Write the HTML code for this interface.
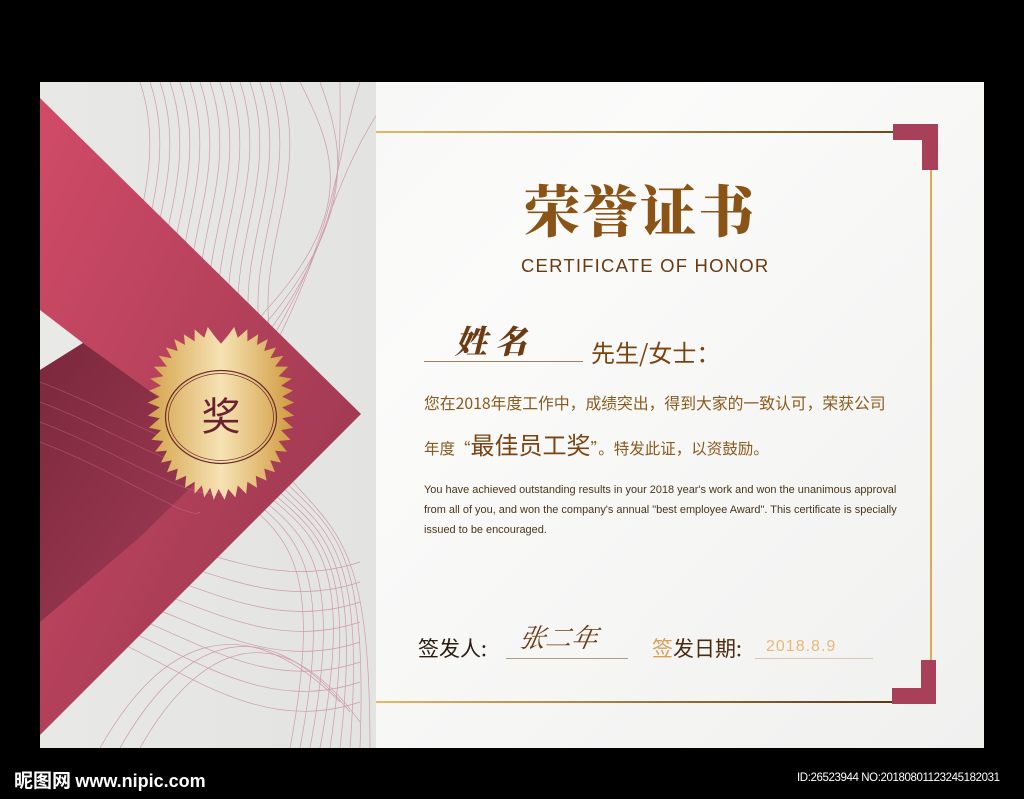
<!DOCTYPE html>
<html><head><meta charset="utf-8"><style>
body{margin:0;width:1024px;height:799px;background:#000;position:relative;overflow:hidden;font-family:"Liberation Sans","Noto Sans CJK SC",sans-serif}
.abs{position:absolute;white-space:nowrap}
.page{position:absolute;left:40px;top:82px;width:944px;height:666px;background:linear-gradient(135deg,#f4f4f3,#fbfbfa 40%,#f0f0ef)}
</style></head><body>
<div class="page"></div>
<svg class="abs" style="left:40px;top:82px" width="336" height="666" viewBox="0 0 336 666">
<defs>
<linearGradient id="lp" x1="0" x2="1"><stop offset="0" stop-color="#e8e8e6"/><stop offset="1" stop-color="#e3e3e1"/></linearGradient>
<linearGradient id="rb" x1="0" y1="0" x2="1" y2="1"><stop offset="0" stop-color="#d14b67"/><stop offset="1" stop-color="#93354d"/></linearGradient>
<linearGradient id="dk" x1="0" y1="0" x2="1" y2="1"><stop offset="0" stop-color="#6e2236"/><stop offset="1" stop-color="#a33e58"/></linearGradient>
</defs>
<rect width="336" height="666" fill="url(#lp)"/>
<g fill="none" stroke="#c88a9c" stroke-width="0.7" opacity="0.8">
<path d="M100 0 C140 120 40 200 120 330 S300 400 250 666"/>
<path d="M110 0 C150 120 50 200 130 330 S310 400 260 666"/>
<path d="M120 0 C160 120 60 200 140 330 S320 400 270 666"/>
<path d="M130 0 C170 120 70 200 150 330 S330 400 280 666"/>
<path d="M140 0 C180 120 80 200 160 330 S330 400 290 666"/>
<path d="M150 0 C190 120 90 200 170 330 S330 400 300 666"/>
<path d="M160 0 C200 120 100 200 180 330 S330 400 310 666"/>
<path d="M170 0 C210 120 110 200 190 330 S330 400 320 666"/>
<path d="M180 0 C220 120 120 200 200 330 S330 410 330 666"/>
<path d="M190 0 C230 120 130 200 210 330"/>
<path d="M200 0 C240 120 140 200 220 330"/>
<path d="M210 0 C250 120 150 200 230 330"/>
<path d="M220 0 C260 120 160 200 240 330"/>
<path d="M230 0 C270 120 170 200 250 330"/>
<path d="M240 0 C280 120 180 200 260 330"/>
<path d="M260 0 C300 80 330 150 150 300"/>
<path d="M280 0 C310 80 320 160 160 310"/>
<path d="M300 0 C300 90 310 170 170 320"/>
<path d="M320 0 C290 90 300 180 180 330"/>
<path d="M360 0 C280 100 290 190 190 340"/>
<path d="M0 460 C120 420 200 520 320 480"/>
<path d="M0 470 C120 440 200 540 320 500"/>
<path d="M0 480 C120 460 200 560 320 520"/>
<path d="M0 490 C120 480 200 580 320 540"/>
<path d="M0 500 C120 500 200 600 320 560"/>
<path d="M0 510 C120 520 200 620 320 580"/>
<path d="M0 520 C120 540 200 640 320 600"/>
<path d="M0 530 C120 560 200 660 320 620"/>
<path d="M60 666 C120 560 200 520 300 620"/>
<path d="M80 666 C140 560 220 520 310 630"/>
<path d="M100 666 C160 560 240 530 320 640"/>
<path d="M0 280 C60 300 80 340 0 380"/>
<path d="M0 290 C70 310 90 340 0 390"/>
</g>
<polygon points="0,16 321,332 0,653" fill="url(#rb)"/>
<polygon points="0,228 43,261 0,288" fill="#e9e9e7"/>
<polygon points="0,288 43,261 190,367 100,455 0,540" fill="url(#dk)" opacity="0.85"/>
<g fill="none" stroke="#e8a8b8" stroke-width="0.6" opacity="0.35">
<path d="M0 300 C80 330 150 380 200 370"/><path d="M0 320 C80 350 150 400 200 390"/><path d="M0 340 C80 370 150 420 180 410"/><path d="M0 360 C80 390 150 440 160 430"/>
</g>
</svg>
<svg class="abs" style="left:143px;top:339px;overflow:visible" width="156" height="156" viewBox="-52 -52 104 104">
<defs><linearGradient id="g2" x1="0" x2="1"><stop offset="0" stop-color="#d4a24a"/><stop offset="0.5" stop-color="#f6e2b4"/><stop offset="1" stop-color="#d09a3e"/></linearGradient></defs>
<polygon fill="url(#g2)" points="0,-61 5,-67 11,-75 14,-66 22,-73 22,-63 31,-69 30,-60 39,-65 36,-55 46,-58 41,-49 52,-51 45,-42 56,-42 48,-34 59,-32 50,-26 60,-22 51,-17 61,-12 51,-8 61,-1 51,1 60,9 50,11 58,19 48,20 55,29 45,28 50,38 41,36 45,46 36,43 38,53 29,49 30,59 22,54 21,64 14,57 12,67 6,60 3,69 -2,60 -6,69 -9,59 -14,67 -16,57 -22,64 -22,54 -30,59 -29,49 -38,53 -36,43 -45,46 -41,36 -50,38 -45,28 -55,29 -48,20 -58,19 -50,11 -60,9 -51,1 -61,-1 -51,-8 -61,-12 -51,-17 -60,-22 -50,-26 -59,-32 -48,-34 -56,-42 -45,-42 -52,-51 -41,-49 -46,-58 -36,-55 -39,-65 -30,-60 -31,-69 -22,-63 -22,-73 -14,-66 -11,-75 -5,-67" transform="scale(0.8)"/>
<ellipse cx="0" cy="0" rx="37" ry="31" fill="none" stroke="#6a2a2a" stroke-width="0.8"/>
<ellipse cx="0" cy="0" rx="35" ry="29" fill="none" stroke="#6a2a2a" stroke-width="0.5"/>
<text x="0" y="9" text-anchor="middle" font-family="Noto Sans CJK SC,sans-serif" font-size="26" fill="#6b2230">奖</text>
</svg>
<!-- border -->
<div class="abs" style="left:376px;top:131px;width:518px;height:2px;background:linear-gradient(90deg,#e8b860,#6b4a1a)"></div>
<div class="abs" style="left:893px;top:124px;width:45px;height:16px;background:#a8405a"></div>
<div class="abs" style="left:922px;top:124px;width:16px;height:46px;background:#a8405a"></div>
<div class="abs" style="left:930px;top:170px;width:2px;height:490px;background:#e0a850"></div>
<div class="abs" style="left:921px;top:660px;width:15px;height:44px;background:#a8405a"></div>
<div class="abs" style="left:892px;top:688px;width:44px;height:16px;background:#a8405a"></div>
<div class="abs" style="left:376px;top:701px;width:516px;height:2px;background:linear-gradient(90deg,#e8b860,#5a3a14)"></div>
<!-- text -->
<div class="abs" style="left:524px;top:174px;font-family:'Noto Serif CJK SC',serif;font-weight:900;font-size:56px;letter-spacing:2px;color:#8a5416;line-height:70px">荣誉证书</div>
<div class="abs" style="left:521px;top:255px;font-size:18.5px;color:#6b3a10;letter-spacing:1.2px">CERTIFICATE OF HONOR</div>
<div class="abs" style="left:455px;top:320px;font-family:'Noto Serif CJK SC',serif;font-weight:900;font-style:italic;font-size:32px;color:#6b3c14;line-height:40px">姓 名</div>
<div class="abs" style="left:424px;top:361px;width:159px;height:1px;background:#a08060"></div>
<div class="abs" style="left:591px;top:337px;font-family:'Noto Sans CJK SC',sans-serif;font-size:24px;color:#7a4410;line-height:30px">先生/女士：</div>
<div class="abs" style="left:424px;top:393px;font-family:'Noto Sans CJK SC',sans-serif;font-size:15.8px;line-height:20px;color:#8a5a1e">您在2018年度工作中，成绩突出，得到大家的一致认可，荣获公司</div>
<div class="abs" style="left:424px;top:427px;font-family:'Noto Sans CJK SC',sans-serif;font-size:15.5px;line-height:34px;color:#8a5a1e">年度“<span style="font-size:24px;color:#7a4412">最佳员工奖</span>”。特发此证，以资鼓励。</div>
<div class="abs" style="left:424px;top:480px;font-size:10.95px;line-height:20px;color:#4a3418">You have achieved outstanding results in your 2018 year's work and won the unanimous approval<br>from all of you, and won the company's annual "best employee Award". This certificate is specially<br>issued to be encouraged.</div>
<div class="abs" style="left:418px;top:634px;font-family:'Noto Sans CJK SC',sans-serif;font-size:21px;line-height:28px;color:#2a1a10">签发人:</div>
<div class="abs" style="left:520px;top:618px;font-family:'Noto Serif CJK SC',serif;font-style:italic;font-size:26px;color:#6b3c14;transform:skewX(-10deg)">张二年</div>
<div class="abs" style="left:506px;top:658px;width:122px;height:1px;background:#b09a80"></div>
<div class="abs" style="left:652px;top:634px;font-family:'Noto Sans CJK SC',sans-serif;font-size:21px;line-height:28px;color:#4a2a10"><span style="color:#d4a060">签</span>发日期:</div>
<div class="abs" style="left:766px;top:638px;font-size:16px;letter-spacing:1px;color:#e8b878">2018.8.9</div>
<div class="abs" style="left:755px;top:658px;width:118px;height:1px;background:#d8c8b0"></div>
<!-- footer -->
<div class="abs" style="left:14px;top:768px;font-family:'Noto Sans CJK SC',sans-serif;font-weight:bold;font-size:19px;color:#fff;line-height:24px">昵图网 <span style="font-family:'Liberation Sans',sans-serif;font-size:18px">www.nipic.com</span></div>
<div class="abs" style="left:797px;top:772px;font-size:11.5px;color:#fff;letter-spacing:-0.4px">ID:26523944 NO:20180801123245182031</div>
</body></html>
